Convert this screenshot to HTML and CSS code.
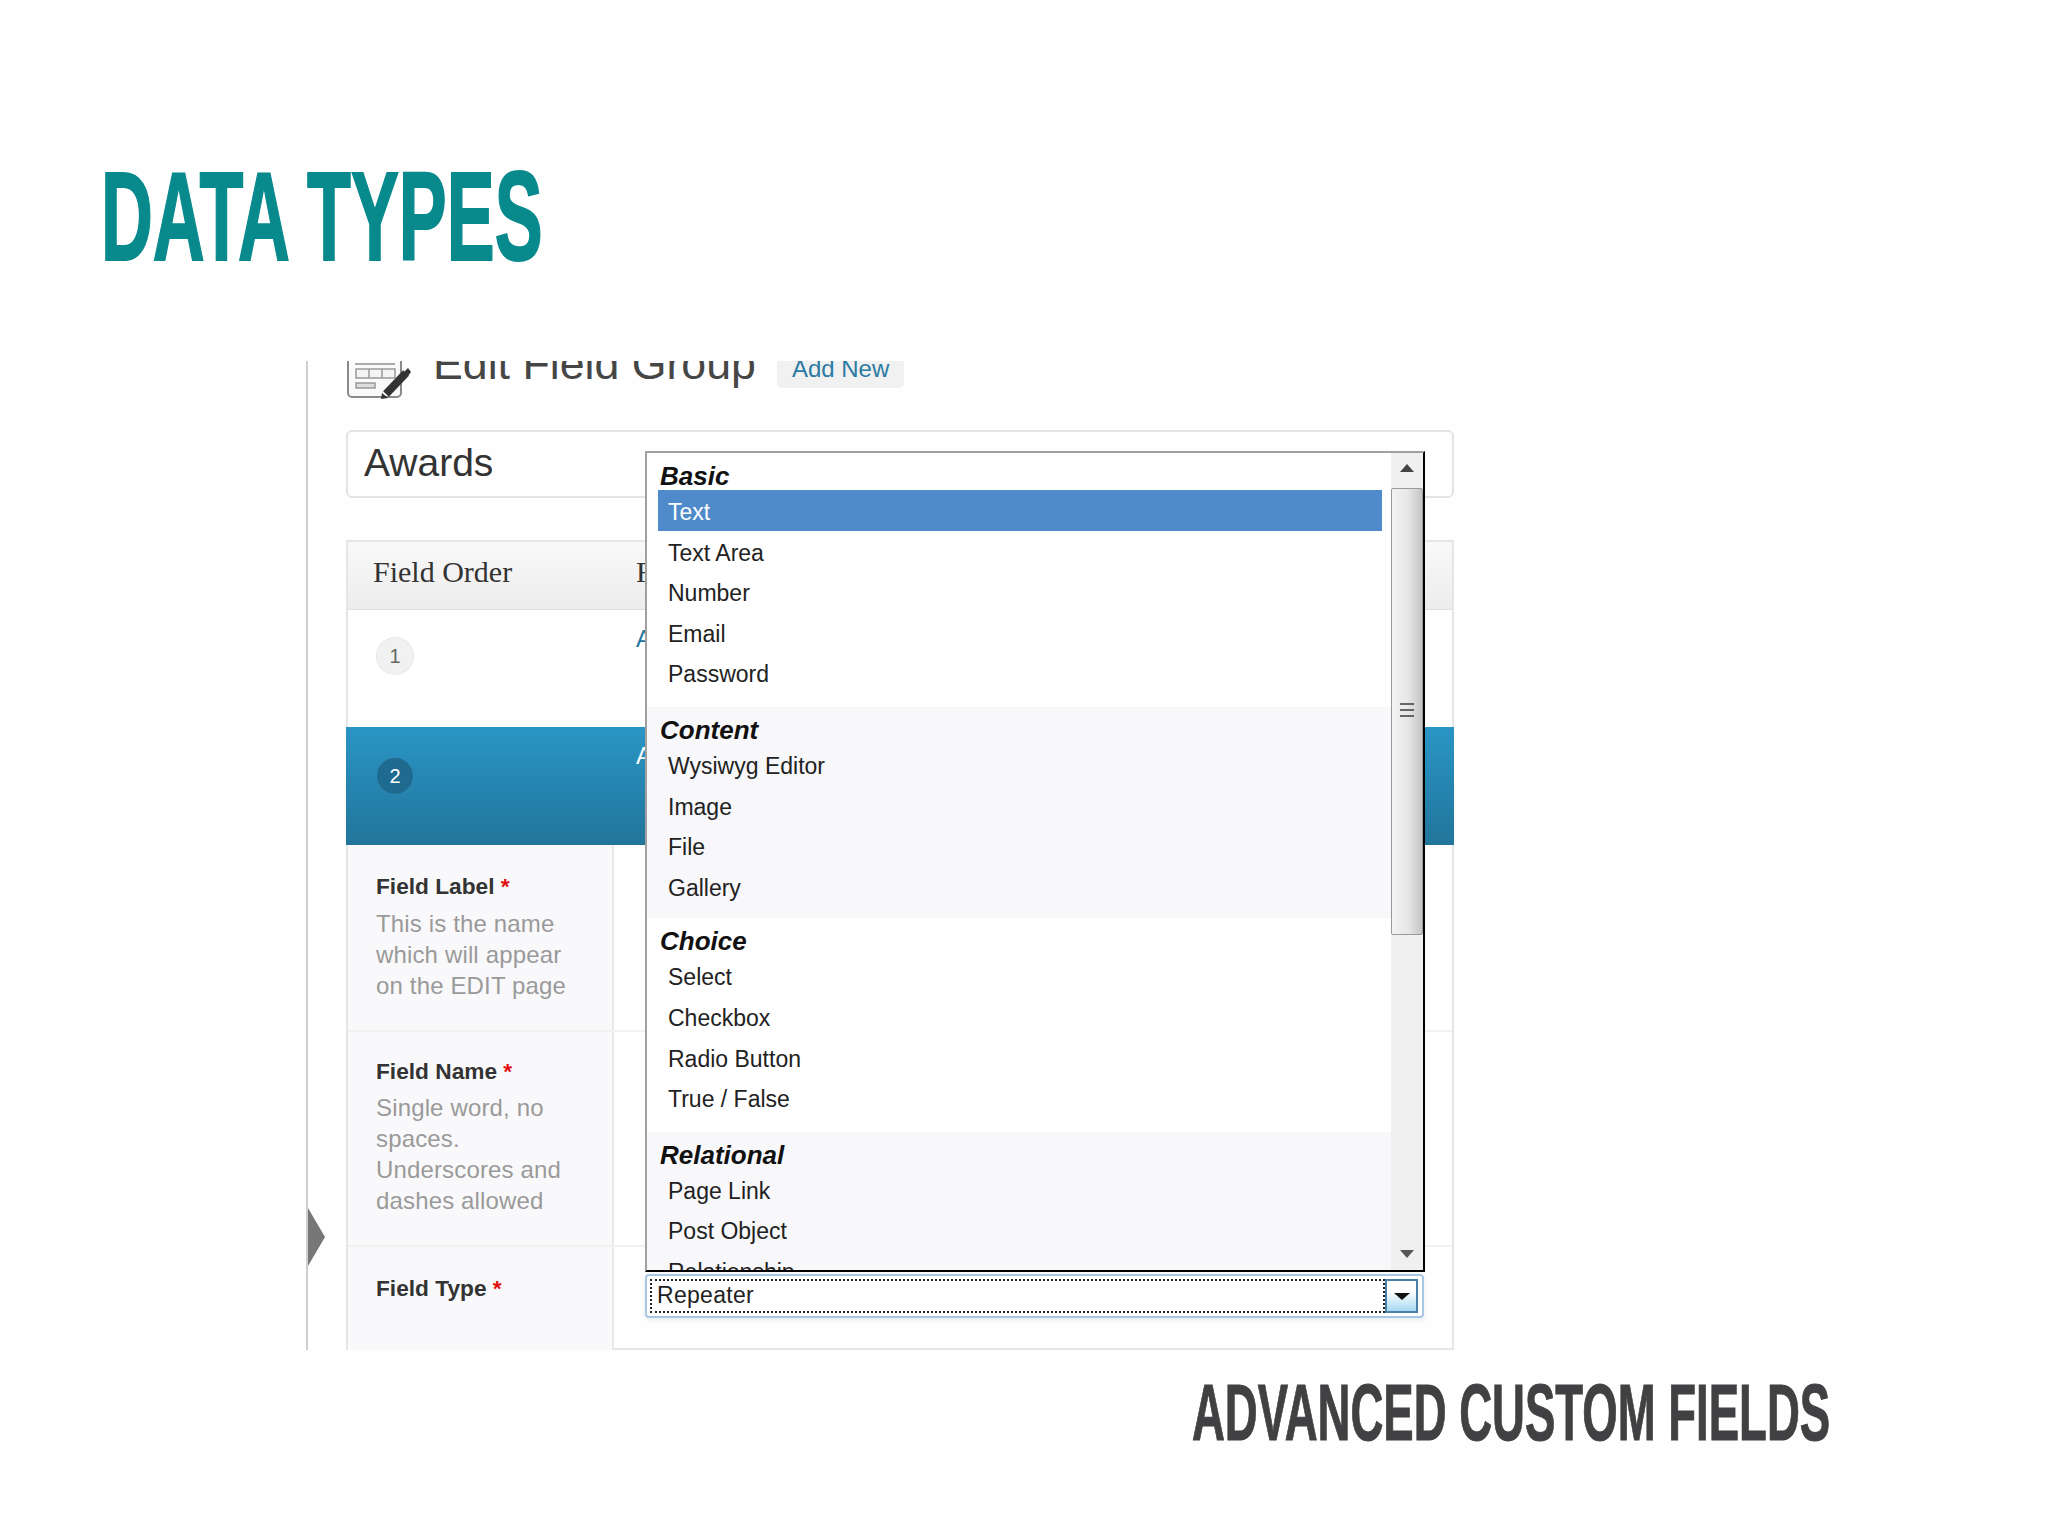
FILE: index.html
```html
<!DOCTYPE html>
<html lang="en">
<head>
    <meta charset="UTF-8">
    <title>Data Types</title>
    <link rel="stylesheet" href="styles.css">
</head>
<body>
    <div class="slide">
        <h1 class="title">DATA TYPES</h1>

        <div class="shot">
            <div class="page-head">
                <svg class="head-icon" width="65" height="39" viewBox="0 0 65 39">
                    <path d="M1 0V32a4 4 0 0 0 4 4H50a4 4 0 0 0 4-4V0" fill="#fafafa" stroke="#8a8a8a" stroke-width="2"/>
                    <path d="M8 3H48" stroke="#aaa" stroke-width="2"/>
                    <path d="M9 8H48V17H9ZM22 8V17M35 8V17" fill="#f4f4f4" stroke="#999" stroke-width="1.5"/>
                    <rect x="9" y="22" width="19" height="5" fill="#ddd" stroke="#999" stroke-width="1.5"/>
                    <path d="M39 33L59 12" stroke="#333" stroke-width="8"/>
                    <path d="M57 11L61 7L64 11L61 15Z" fill="#333"/>
                    <path d="M35 32L41 37L34 38Z" fill="#333"/>
                </svg>
                <h2 class="head-text">Edit Field Group</h2>
                <span class="add-new">Add New</span>
            </div>

            <div class="title-box">Awards</div>

            <div class="fields">
                <div class="fields-head">
                    <span class="col-order">Field Order</span>
                    <span>Field Label</span>
                </div>
                <div class="field-row">
                    <span class="col-order"><span class="badge">1</span></span>
                    <span class="field-link">Awards</span>
                </div>
                <div class="field-row active">
                    <span class="col-order"><span class="badge">2</span></span>
                    <span class="field-link">Awards</span>
                </div>

                <div class="form-row row-label">
                    <div class="form-side">
                        <div class="form-name">Field Label <b>*</b></div>
                        <p>This is the name which will appear on the EDIT page</p>
                    </div>
                    <div></div>
                </div>
                <div class="form-row row-name">
                    <div class="form-side">
                        <div class="form-name">Field Name <b>*</b></div>
                        <p>Single word, no spaces. Underscores and dashes allowed</p>
                    </div>
                    <div></div>
                </div>
                <div class="form-row row-type">
                    <div class="form-side">
                        <div class="form-name">Field Type <b>*</b></div>
                    </div>
                    <div>
                        <div class="select">
                            <div class="select-value">Repeater</div>
                            <div class="select-btn"><i></i></div>
                        </div>
                    </div>
                </div>
            </div>

            <div class="pointer"></div>

            <div class="dropdown">
                <div class="list">
                    <div class="group basic">
                        <div class="group-name">Basic</div>
                        <div class="opt selected">Text</div>
                        <div class="opt">Text Area</div>
                        <div class="opt">Number</div>
                        <div class="opt">Email</div>
                        <div class="opt">Password</div>
                    </div>
                    <div class="group tint content">
                        <div class="group-name">Content</div>
                        <div class="opt">Wysiwyg Editor</div>
                        <div class="opt">Image</div>
                        <div class="opt">File</div>
                        <div class="opt">Gallery</div>
                    </div>
                    <div class="group">
                        <div class="group-name">Choice</div>
                        <div class="opt">Select</div>
                        <div class="opt">Checkbox</div>
                        <div class="opt">Radio Button</div>
                        <div class="opt">True / False</div>
                    </div>
                    <div class="group tint">
                        <div class="group-name">Relational</div>
                        <div class="opt">Page Link</div>
                        <div class="opt">Post Object</div>
                        <div class="opt">Relationship</div>
                    </div>
                </div>
                <div class="scrollbar">
                    <div class="arrow up"></div>
                    <div class="thumb">
                        <div class="grip"></div>
                    </div>
                    <div class="track"></div>
                    <div class="arrow down"></div>
                </div>
            </div>
        </div>

        <div class="caption">ADVANCED CUSTOM FIELDS</div>
    </div>
</body>
</html>
```

FILE: styles.css
```css
body{
    margin:0;
    background-color:#fefefe;
    font-family:"Liberation Sans",Arial,sans-serif;
}
.slide{
    width:2048px;
    height:1536px;
    padding-top:156px;
    box-sizing:border-box;
    overflow:hidden;
}
.title{
    margin:0 0 83px 101px;
    width:max-content;
    font-family:"Liberation Sans Narrow","Liberation Sans",sans-serif;
    font-size:126px;
    line-height:122px;
    font-weight:bold;
    color:#088a8d;
    -webkit-text-stroke:2px #088a8d;
    transform:scaleX(.57);
    transform-origin:left;
}
.caption{
    margin:23px 0 0 1192px;
    width:max-content;
    font-family:"Liberation Sans Narrow","Liberation Sans",sans-serif;
    font-size:80px;
    line-height:80px;
    font-weight:bold;
    color:#414042;
    -webkit-text-stroke:1px #414042;
    transform:scaleX(.569);
    transform-origin:left;
}

/* the pasted wp-admin screenshot */
.shot{
    position:relative;
    margin-left:306px;
    width:1150px;
    height:989px;
    box-sizing:border-box;
    padding-left:38px;
    border-left:2px solid #cfcfcf;
    overflow:hidden;
}
.page-head{
    display:flex;
    align-items:flex-start;
    height:39px;
    overflow:hidden;
}
.head-icon{
    flex:none;
    margin:0 21px 0 1px;
}
.head-text{
    margin:-23px 21px 0 0;
    font-size:44.7px;
    line-height:52px;
    font-weight:normal;
    color:#464646;
}
.add-new{
    height:27px;
    padding:0 15px;
    background-color:#f1f1f1;
    border-radius:0 0 5px 5px;
    font-size:24px;
    line-height:16px;
    color:#2c7ba3;
}
.title-box{
    margin-top:30px;
    width:1108px;
    height:68px;
    box-sizing:border-box;
    padding-left:16px;
    border:2px solid #e4e4e4;
    border-radius:6px;
    font-size:39px;
    line-height:62px;
    color:#333;
}

.fields{
    margin-top:42px;
    width:1108px;
    height:810px;
    box-sizing:border-box;
    border:2px solid #e6e6e6;
}
.fields-head{
    display:flex;
    height:67px;
    background:linear-gradient(#f9f9f9,#ececec);
    border-bottom:1px solid #dfdfdf;
    font-family:"Liberation Serif",serif;
    font-size:30px;
    line-height:60px;
    color:#333;
}
.col-order{
    flex:none;
    width:288px;
    padding-left:25px;
    box-sizing:border-box;
}
.field-row{
    display:flex;
    height:117px;
    background-color:#fff;
}
.field-row .col-order{
    padding-left:29px;
    padding-top:28px;
}
.field-link{
    font-size:24px;
    line-height:46px;
    color:#21759b;
    padding-top:6px;
}
.badge{
    display:block;
    width:36px;
    height:36px;
    border-radius:50%;
    background-color:#f1f1f1;
    box-shadow:0 0 0 1px #e8e8e8;
    font-family:"Liberation Sans",sans-serif;
    font-size:20px;
    line-height:36px;
    text-align:center;
    color:#666;
}
.active{
    height:118px;
    margin:0 -2px;
    padding-left:2px;
    background:linear-gradient(#2a95c5,#21759b);
}
.active .col-order{
    padding-top:31px;
}
.active .badge{
    background-color:#1f6a8f;
    box-shadow:0 0 0 1px #2b88b4;
    color:#fff;
}
.active .field-link{
    color:#fff;
}
.form-row{
    display:grid;
    grid-template-columns:266px 1fr;
    border-bottom:2px solid #f1f1f1;
}
.row-label{
    height:185px;
}
.row-name{
    height:213px;
}
.row-type{
    height:106px;
    border-bottom:none;
}
.form-side{
    padding:25px 40px 0 28px;
    background-color:#f9f9fb;
    border-right:2px solid #e8e8e8;
}
.form-name{
    font-size:22.7px;
    line-height:32px;
    font-weight:bold;
    white-space:nowrap;
    color:#333;
}
.form-name b{
    color:#e01010;
}
.form-side p{
    margin:6px 0 0;
    font-size:24px;
    line-height:31px;
    letter-spacing:.15px;
    color:#9a9a9a;
}
.row-name .form-side{
    padding-top:23px;
}
.row-type .form-side{
    padding-top:25px;
}
.row-name .form-side p{
    margin-top:5px;
}

.select{
    display:flex;
    margin:27px 0 0 31px;
    width:779px;
    height:44px;
    box-sizing:border-box;
    padding:3px;
    border:2px solid #a9c7e2;
    border-radius:4px;
    box-shadow:0 2px 5px #e4ecf4;
    background-color:#fff;
}
.select-value{
    flex:1;
    padding-left:5px;
    border:2px dotted #222;
    font-size:23px;
    line-height:28px;
    letter-spacing:.3px;
    color:#222;
}
.select-btn{
    flex:none;
    display:flex;
    align-items:center;
    justify-content:center;
    width:33px;
    margin-right:1px;
    box-sizing:border-box;
    border:2px solid #4a7fa8;
    background:linear-gradient(#fff 35%,#a6d8f2);
}
.select-btn i{
    border:8px solid transparent;
    border-top:7px solid #111;
    border-bottom:none;
}

.pointer{
    position:absolute;
    left:0;
    top:847px;
    border-left:17px solid #777;
    border-top:29px solid transparent;
    border-bottom:29px solid transparent;
}

/* open select list, sits over the table */
.dropdown{
    position:absolute;
    left:337px;
    top:90px;
    display:flex;
    width:780px;
    height:821px;
    box-sizing:border-box;
    border:2px solid;
    border-color:#a0a0a0 #000 #000 #a0a0a0;
    background-color:#fff;
    color:#222;
}
.list{
    flex:1;
    overflow:hidden;
}
.group{
    padding-bottom:12px;
}
.tint{
    background-color:#f8f8fb;
}
.basic{
    margin-top:-2px;
    padding-bottom:14px;
}
.content{
    padding-bottom:10px;
}
.group-name{
    height:39px;
    box-sizing:border-box;
    padding:8px 0 0 13px;
    font-size:26px;
    line-height:31px;
    font-weight:bold;
    font-style:italic;
    color:#111;
}
.basic .group-name{
    padding-top:10px;
}
.opt{
    height:40.6px;
    margin:0 9px 0 11px;
    padding-left:10px;
    font-size:23px;
    line-height:41.6px;
}
.basic .opt{
    line-height:45px;
}
.selected{
    background-color:#4f8aca;
    color:#fff;
}
.scrollbar{
    flex:none;
    display:flex;
    flex-direction:column;
    width:32px;
    background-color:#f0f0f0;
}
.arrow{
    flex:none;
    height:35px;
    position:relative;
}
.up:after,.down:after{
    content:"";
    position:absolute;
    left:9px;
    border:7px solid transparent;
}
.up:after{
    top:11px;
    border-top:none;
    border-bottom:8px solid #444;
}
.down:after{
    top:15px;
    border-bottom:none;
    border-top:8px solid #555;
}
.thumb{
    flex:none;
    display:flex;
    justify-content:center;
    height:447px;
    box-sizing:border-box;
    padding-top:214px;
    border:1px solid #999;
    border-radius:2px;
    background:linear-gradient(to right,#f4f4f4,#e6e6e6 55%,#c4c4c4);
}
.grip{
    width:14px;
    height:14px;
    background:repeating-linear-gradient(#666 0,#666 2px,transparent 2px,transparent 6px);
}
.track{
    flex:1;
}
```
